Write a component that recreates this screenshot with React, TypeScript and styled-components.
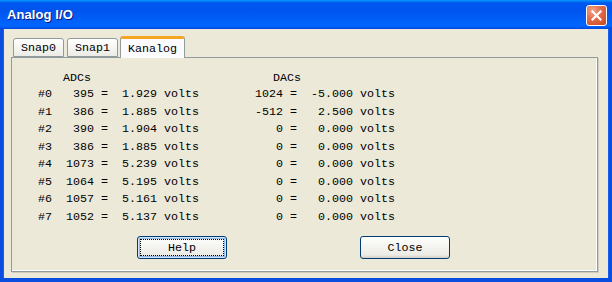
import styled, { createGlobalStyle } from "styled-components";

const GlobalStyle = createGlobalStyle`
  html, body {
    margin: 0;
    padding: 0;
    background: #ffffff;
  }
`;

const MONO = `"Liberation Mono", "DejaVu Sans Mono", monospace`;

const Window = styled.div`
  width: 612px;
  height: 282px;
  display: flex;
  flex-direction: column;
  background: #0a4ee0;
  overflow: hidden;
`;

const TitleBar = styled.div`
  height: 29px;
  flex: none;
  display: flex;
  align-items: center;
  justify-content: space-between;
  padding: 0 5px 0 7px;
  box-sizing: border-box;
  background: linear-gradient(
    #0997ff 0%,
    #0058ee 10%,
    #0053ee 35%,
    #0060f8 70%,
    #0066ff 88%,
    #005bf4 94%,
    #0044d8 100%
  );
`;

const Title = styled.span`
  font-family: "Liberation Sans", Arial, sans-serif;
  font-weight: bold;
  font-size: 13px;
  color: #ffffff;
  text-shadow: 1px 1px 0 #0a1883;
  letter-spacing: 0.1px;
`;

const CloseButton = styled.div`
  width: 21px;
  height: 21px;
  box-sizing: border-box;
  border: 1px solid #ffffff;
  border-radius: 3px;
  background: radial-gradient(circle at 30% 25%, #f0a58c 0%, #e3704d 40%, #c94420 100%);
  display: flex;
  align-items: center;
  justify-content: center;
  margin-top: 1px;
`;

const Client = styled.div`
  flex: 1;
  display: flex;
  flex-direction: column;
  background: #ece9d8;
  margin: 0 4px 4px 4px;
  padding: 7px 10px 6px 7px;
  box-shadow: -1px 0 0 #1660f0, 1px 0 0 #1660f0;
`;

const TabStrip = styled.div`
  height: 21px;
  display: flex;
  align-items: flex-end;
  padding-left: 2px;
`;

const Tab = styled.div<{ $active?: boolean }>`
  position: relative;
  z-index: ${(p) => (p.$active ? 2 : 1)};
  box-sizing: border-box;
  height: ${(p) => (p.$active ? "22px" : "19px")};
  margin-bottom: ${(p) => (p.$active ? "-1px" : "0")};
  margin-left: ${(p) => (p.$active ? "-1px" : "0")};
  margin-right: ${(p) => (p.$active ? "0" : "3px")};
  padding: ${(p) => (p.$active ? "0 7px" : "1px 7px 0")};
  display: flex;
  align-items: center;
  font-family: ${MONO};
  font-size: 11.67px;
  color: #000000;
  border: 1px solid #919b9c;
  border-bottom: ${(p) => (p.$active ? "none" : "1px solid #919b9c")};
  border-top: ${(p) => (p.$active ? "3px solid #f5a623" : "1px solid #919b9c")};
  border-radius: 3px 3px 0 0;
  background: ${(p) =>
    p.$active ? "#fcfcfe" : "linear-gradient(#ffffff, #f3f3ef 60%, #ecebe6)"};
`;

const Panel = styled.div`
  flex: 1;
  border: 1px solid #919b9c;
  box-shadow: inset -1px -1px 0 #ffffff, 1px 1px 0 #d0cebf;
  padding: 12px 0 0 26px;
  font-family: ${MONO};
  font-size: 11.67px;
  color: #000000;
`;

const HeaderRow = styled.div`
  display: flex;
  height: 16px;
  line-height: 16px;
`;

const HeadLabel = styled.span<{ $shift: number }>`
  margin-left: ${(p) => p.$shift}px;
`;

const Table = styled.div`
  display: grid;
  grid-template-columns: 28px 28px 21px 42px 42px 56px 28px 28px 42px 42px;
  white-space: pre;
`;

const Cell = styled.div<{ $right?: boolean }>`
  height: 17.5px;
  line-height: 17.5px;
  text-align: ${(p) => (p.$right ? "right" : "left")};
`;

const ButtonRow = styled.div`
  display: flex;
  gap: 133px;
  margin: 10px 0 0 99px;
`;

const Button = styled.div<{ $default?: boolean }>`
  width: 90px;
  height: 23px;
  box-sizing: border-box;
  border: 1px solid #003c74;
  border-radius: 3px;
  background: linear-gradient(#ffffff 0%, #f4f4f0 45%, #ecebe6 85%, #d6d0c5 100%);
  box-shadow: ${(p) =>
    p.$default ? "inset 0 0 0 1px #cee7ff, inset 0 0 0 2px #98b8ea" : "none"};
  display: flex;
  align-items: center;
  justify-content: center;
  font-family: ${MONO};
  font-size: 11.67px;
  color: #000000;
  outline: ${(p) => (p.$default ? "1px dotted #000000" : "none")};
  outline-offset: -4px;
`;

type Row = { adc: number; adcV: string; dac: number; dacV: string };

const rows: Row[] = [
  { adc: 395, adcV: "1.929", dac: 1024, dacV: "-5.000" },
  { adc: 386, adcV: "1.885", dac: -512, dacV: "2.500" },
  { adc: 390, adcV: "1.904", dac: 0, dacV: "0.000" },
  { adc: 386, adcV: "1.885", dac: 0, dacV: "0.000" },
  { adc: 1073, adcV: "5.239", dac: 0, dacV: "0.000" },
  { adc: 1064, adcV: "5.195", dac: 0, dacV: "0.000" },
  { adc: 1057, adcV: "5.161", dac: 0, dacV: "0.000" },
  { adc: 1052, adcV: "5.137", dac: 0, dacV: "0.000" },
];

export default function App() {
  return (
    <>
      <GlobalStyle />
      <Window>
        <TitleBar>
          <Title>Analog I/O</Title>
          <CloseButton>
            <svg width="11" height="11" viewBox="0 0 11 11">
              <path d="M1.5 1.5 L9.5 9.5 M9.5 1.5 L1.5 9.5" stroke="#ffffff" strokeWidth="2.2" strokeLinecap="square" />
            </svg>
          </CloseButton>
        </TitleBar>
        <Client>
          <TabStrip>
            <Tab>Snap0</Tab>
            <Tab>Snap1</Tab>
            <Tab $active>Kanalog</Tab>
          </TabStrip>
          <Panel>
            <HeaderRow>
              <HeadLabel $shift={25}>ADCs</HeadLabel>
              <HeadLabel $shift={182}>DACs</HeadLabel>
            </HeaderRow>
            <Table>
              {rows.map((r, i) => (
                <DataRow key={i} i={i} r={r} />
              ))}
            </Table>
            <ButtonRow>
              <Button $default>Help</Button>
              <Button>Close</Button>
            </ButtonRow>
          </Panel>
        </Client>
      </Window>
    </>
  );
}

function DataRow({ i, r }: { i: number; r: Row }) {
  return (
    <>
      <Cell>#{i}</Cell>
      <Cell $right>{r.adc}</Cell>
      <Cell>{" ="}</Cell>
      <Cell $right>{r.adcV}</Cell>
      <Cell>{" volts"}</Cell>
      <Cell />
      <Cell $right>{r.dac}</Cell>
      <Cell>{" ="}</Cell>
      <Cell $right>{r.dacV}</Cell>
      <Cell>{" volts"}</Cell>
    </>
  );
}
